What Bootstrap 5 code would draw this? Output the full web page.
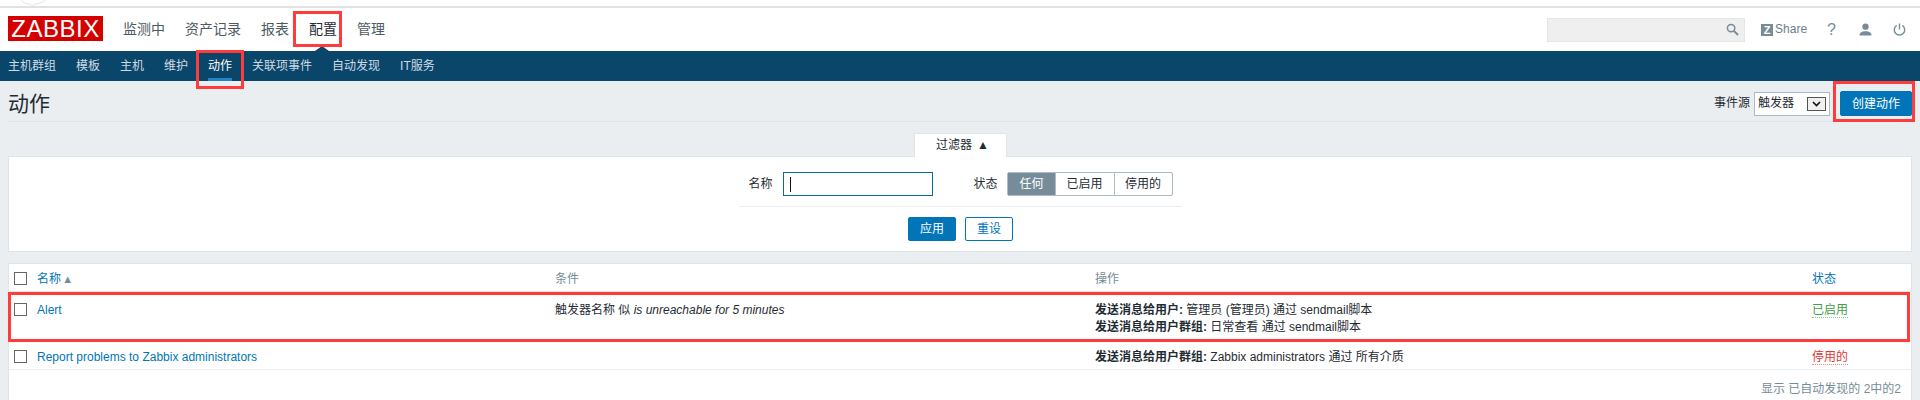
<!DOCTYPE html>
<html lang="zh-CN">
<head>
<meta charset="utf-8">
<title>动作</title>
<link href="https://cdn.jsdelivr.net/npm/bootstrap@5.3.0/dist/css/bootstrap.min.css" rel="stylesheet">
<style>
body{font-family:"Liberation Sans","Noto Sans CJK SC",sans-serif;font-size:12px;line-height:17px;color:#1f2c33;background:#ebeef0;height:400px;overflow:hidden;position:relative}
a{text-decoration:none}
.top-strip{height:8px;background:#fff;border-bottom:2px solid #dfe1e2}
.top-strip svg{display:block;margin-left:20px}
.main-bar{height:43px;background:#fff;padding:0 14px 0 8px;position:relative}
.logo-box{width:95px;height:25px;background:#d40000;color:#fff;font-size:24px;line-height:25px;text-align:center;letter-spacing:.5px;margin:0 20px 2px 0}
.main-links{gap:20px;font-size:14px}
.main-links a{color:#4d5a61}
.main-links a.on{color:#1f2c33}
.caret-up{position:absolute;left:315px;bottom:0;width:0;height:0;border:7px solid transparent;border-top:0;border-bottom:5px solid #0a466a}
.search-box{width:198px;height:24px;background:#efefef;border:1px solid #e6e6e6;margin-right:16px;padding-right:5px}
.share-link{color:#6b808c;gap:2px;font-size:12px;margin-right:20px}
.z-mark{width:12px;height:12px;background:#768d99;color:#fff;font-weight:700;font-size:11px;line-height:12px;text-align:center}
.help-mark{color:#768d99;font-size:16px;margin-right:23px}
.user-ico{margin-right:21px}
.sub-bar{height:30px;background:#0a466a;padding-left:8px;gap:20px}
.sub-bar a{color:#cfdbe3;height:30px;line-height:31px;display:block}
.sub-bar a.on{color:#fff;border-bottom:3px solid #1d85c8}
.head-row{height:41px;margin:0 8px;border-bottom:1px solid #dfe4e7;padding-top:10px;padding-bottom:5px}
.page-name{font-size:21px;line-height:26px;font-weight:400;margin:0;color:#1f2c33}
.src-select{width:76px;height:24px;background:#fff;border:1px solid #acbbc4;margin:0 10px 0 4px;padding:0 3px 0 3px}
.src-arrow{width:19px;height:14px;border:1px solid #555;background:#f0f0f0}
.btn-make{width:72px;height:25px;padding:0;font-size:12px;background:#0275b8;border:1px solid #0275b8;color:#fff;border-radius:2px}
.tab-row{margin-top:11px;height:23px}
.tab-item{width:93px;height:24px;background:#fff;border:1px solid #dfe4e7;border-bottom:0;border-radius:2px 2px 0 0;text-align:center;line-height:23px;position:relative;z-index:1;padding-left:5px}
.tab-tri{font-size:12px;margin-left:5px}
.filter-panel{margin:0 8px;height:96px;background:#fff;border:1px solid #dfe4e7;padding-top:15px}
.field-row{padding-left:1px}
.name-input{width:150px;height:24px;border:1px solid #0a6aa0;border-radius:0;margin:0 40px 0 11px;padding:0 5px;font-size:12px;box-shadow:none;background:#fff linear-gradient(#111,#111) no-repeat 6px center/1px 15px}
.seg-group{height:24px;margin-left:10px;border:1px solid #acbbc4;border-radius:2px}
.seg-group span{padding:0 11px;line-height:22px;border-right:1px solid #acbbc4;display:block}
.seg-group span:last-child{border-right:0;padding:0 10.5px}
.seg-group span.on{background:#768d99;color:#fff;padding:0 11px}
.panel-rule{width:443px;height:1px;background:#ebeef0;margin:10px auto 10px}
.btn-row{gap:9px;padding-left:1px}
.btn-apply,.btn-clear{width:48px;height:24px;padding:0;font-size:12px;line-height:20px;border-radius:2px}
.btn-apply{background:#0275b8;border:1px solid #0275b8;color:#fff}
.btn-clear{background:#fff;border:1px solid #0275b8;color:#0275b8}
.list-card{margin:11px 8px 0;background:#fff;border:1px solid #dfe4e7;border-bottom:0;height:140px}
.zbx-table{width:100%;table-layout:fixed;margin:0;border-collapse:collapse;font-size:12px}
.zbx-table th,.zbx-table td{padding:10px 5px 4px;font-weight:400;vertical-align:top;border:0;border-bottom:1px solid #ebeef0;background:transparent;line-height:17px;color:#1f2c33}
.zbx-table th{color:#768d99;padding:7px 5px 3px;border-bottom:1px solid #dfe4e7}
.zbx-table tbody tr:last-child td{padding:8px 5px 3px}
.zbx-table a{color:#0275b8}
.zbx-table .form-check-input{width:13px;height:13px;margin:1px 0 0;border:1px solid #666;border-radius:0;float:none;display:block}
.col-box{padding-right:0!important}
.sort-up{color:#768d99;font-size:11px;margin-left:-2px}
.state-on{color:#429e47!important;border-bottom:1px dotted #429e4799}
.state-off{color:#e33734!important;border-bottom:1px dotted #e3373499}
.list-foot{color:#768d99;text-align:right;padding:11px 10px 0 0}
.mark-box{position:absolute;border:3px solid #ff3b3b;pointer-events:none}
.mark-a{left:293px;top:11px;width:49px;height:36px}
.mark-b{left:196px;top:50px;width:48px;height:39px}
.mark-c{left:1833px;top:81px;width:82px;height:41px}
.mark-d{left:8px;top:292px;width:1902px;height:50px}
</style>
</head>
<body>
<div class="top-strip"><svg width="26" height="6" viewBox="0 0 26 6" fill="none" stroke="#e4e6e7"><path d="M1 0C3 3 7 4 11 4.500L12 6L14 4.500C18 4 22 3 25 0"/></svg></div>
<div class="main-bar d-flex align-items-center">
  <div class="logo-box">ZABBIX</div>
  <nav class="main-links d-flex">
    <a href="#">监测中</a><a href="#">资产记录</a><a href="#">报表</a><a href="#" class="on">配置</a><a href="#">管理</a>
  </nav>
  <span class="caret-up"></span>
  <div class="ms-auto d-flex align-items-center">
    <div class="search-box d-flex align-items-center justify-content-end">
      <svg width="13" height="13" viewBox="0 0 14 14" fill="none" stroke="#768d99" stroke-width="1.6"><circle cx="5.5" cy="5.5" r="4"/><path d="M8.5 8.5 13 13" stroke-width="2.2"/></svg>
    </div>
    <a href="#" class="share-link d-flex align-items-center"><span class="z-mark">Z</span>Share</a>
    <span class="help-mark">?</span>
    <svg class="user-ico" width="13" height="13" viewBox="0 0 14 14" fill="#768d99"><circle cx="7" cy="4" r="3.4"/><path d="M0.5 13.5C0.5 10 3.5 8.8 7 8.8s6.500 1.200 6.500 4.700z"/></svg>
    <svg width="13" height="13" viewBox="0 0 14 14" fill="none" stroke="#768d99" stroke-width="1.5"><path d="M4 2.600A5.600 5.600 0 1 0 10 2.600"/><path d="M7 0.500V7"/></svg>
  </div>
</div>
<nav class="sub-bar d-flex">
  <a href="#">主机群组</a><a href="#">模板</a><a href="#">主机</a><a href="#">维护</a><a href="#" class="on">动作</a><a href="#">关联项事件</a><a href="#">自动发现</a><a href="#">IT服务</a>
</nav>
<div class="head-row d-flex align-items-center justify-content-between">
  <h1 class="page-name">动作</h1>
  <div class="d-flex align-items-center">
    <span>事件源</span>
    <div class="src-select d-flex align-items-center justify-content-between">
      <span>触发器</span>
      <span class="src-arrow d-flex align-items-center justify-content-center"><svg width="9" height="6" viewBox="0 0 9 6" fill="none" stroke="#111" stroke-width="1.600"><path d="M1 1l3.500 3.500L8 1"/></svg></span>
    </div>
    <button class="btn btn-make" type="button">创建动作</button>
  </div>
</div>
<div class="tab-row d-flex justify-content-center">
  <div class="tab-item">过滤器<span class="tab-tri">▲</span></div>
</div>
<div class="filter-panel">
  <div class="field-row d-flex align-items-center justify-content-center">
    <span>名称</span>
    <input class="form-control name-input" type="text">
    <span>状态</span>
    <div class="seg-group d-flex"><span class="on">任何</span><span>已启用</span><span>停用的</span></div>
  </div>
  <div class="panel-rule"></div>
  <div class="btn-row d-flex justify-content-center">
    <button class="btn btn-apply" type="button">应用</button>
    <button class="btn btn-clear" type="button">重设</button>
  </div>
</div>
<div class="list-card">
  <table class="table zbx-table">
    <colgroup><col style="width:23px"><col style="width:518px"><col style="width:540px"><col style="width:717px"><col></colgroup>
    <thead>
      <tr>
        <th class="col-box"><input class="form-check-input" type="checkbox"></th>
        <th><a href="#">名称</a> <span class="sort-up">▲</span></th>
        <th>条件</th>
        <th>操作</th>
        <th><a href="#">状态</a></th>
      </tr>
    </thead>
    <tbody>
      <tr>
        <td class="col-box"><input class="form-check-input" type="checkbox"></td>
        <td><a href="#">Alert</a></td>
        <td>触发器名称 似 <em>is unreachable for 5 minutes</em></td>
        <td><b>发送消息给用户:</b> 管理员 (管理员) 通过 sendmail脚本<br><b>发送消息给用户群组:</b> 日常查看 通过 sendmail脚本</td>
        <td><a href="#" class="state-on">已启用</a></td>
      </tr>
      <tr>
        <td class="col-box"><input class="form-check-input" type="checkbox"></td>
        <td><a href="#">Report problems to Zabbix administrators</a></td>
        <td></td>
        <td><b>发送消息给用户群组:</b> Zabbix administrators 通过 所有介质</td>
        <td><a href="#" class="state-off">停用的</a></td>
      </tr>
    </tbody>
  </table>
  <div class="list-foot">显示 已自动发现的 2中的2</div>
</div>
<div class="mark-box mark-a"></div>
<div class="mark-box mark-b"></div>
<div class="mark-box mark-c"></div>
<div class="mark-box mark-d"></div>
</body>
</html>
